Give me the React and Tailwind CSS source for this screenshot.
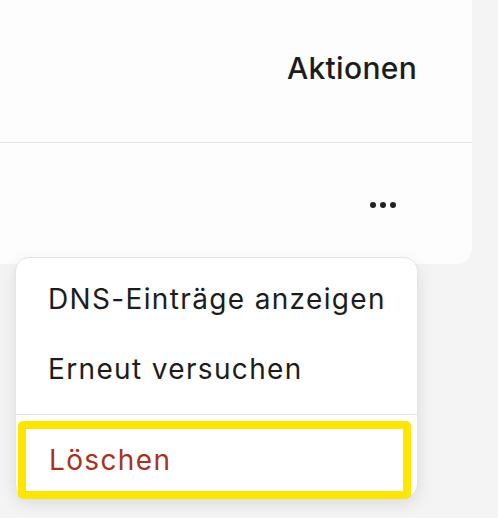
import React from 'react';

export default function App() {
    return (
        <div className="relative w-[498px] h-[518px] overflow-hidden bg-[#f4f4f4] font-['Inter','Liberation_Sans',sans-serif] text-[#1c1c1c]">
            <div className="-mt-4 -ml-4 w-[488px] rounded-2xl bg-[#fdfdfd]">
                <div className="h-[159px] flex justify-end items-start pt-[66px] pr-[55px] border-b border-[#e2e2e2]">
                    <span className="text-[30px] leading-[36px] font-medium tracking-[0.3px]">Aktionen</span>
                </div>
                <div className="h-[121px] flex justify-end items-center pt-[3px] pr-[76px]">
                    <div className="flex gap-[4px]">
                        <span className="w-[6px] h-[6px] rounded-full bg-[#222]"></span>
                        <span className="w-[6px] h-[6px] rounded-full bg-[#222]"></span>
                        <span className="w-[6px] h-[6px] rounded-full bg-[#222]"></span>
                    </div>
                </div>
            </div>

            <div className="absolute left-[15px] top-[257px] w-[403px] h-[241px] rounded-[14px] border border-[#e3e3e3] bg-white shadow-[0_6px_16px_rgba(0,0,0,0.10)]">
                <div className="pt-[6px] text-[28px] tracking-[1.35px]">
                    <div className="h-[70px] pl-[32px] leading-[70px]">DNS-Einträge anzeigen</div>
                    <div className="h-[70px] pl-[32px] leading-[70px]">Erneut versuchen</div>
                    <div className="my-[10px] h-px bg-[#e3e3e3]"></div>
                    <div className="-mt-[4px] ml-[2px] w-[393px] h-[78px] rounded-[5px] border-[8px] border-[#ffe600] pl-[23px] pt-[10px]">
                        <span className="leading-[34px] text-[#a8321f]">Löschen</span>
                    </div>
                </div>
            </div>
        </div>
    );
}
